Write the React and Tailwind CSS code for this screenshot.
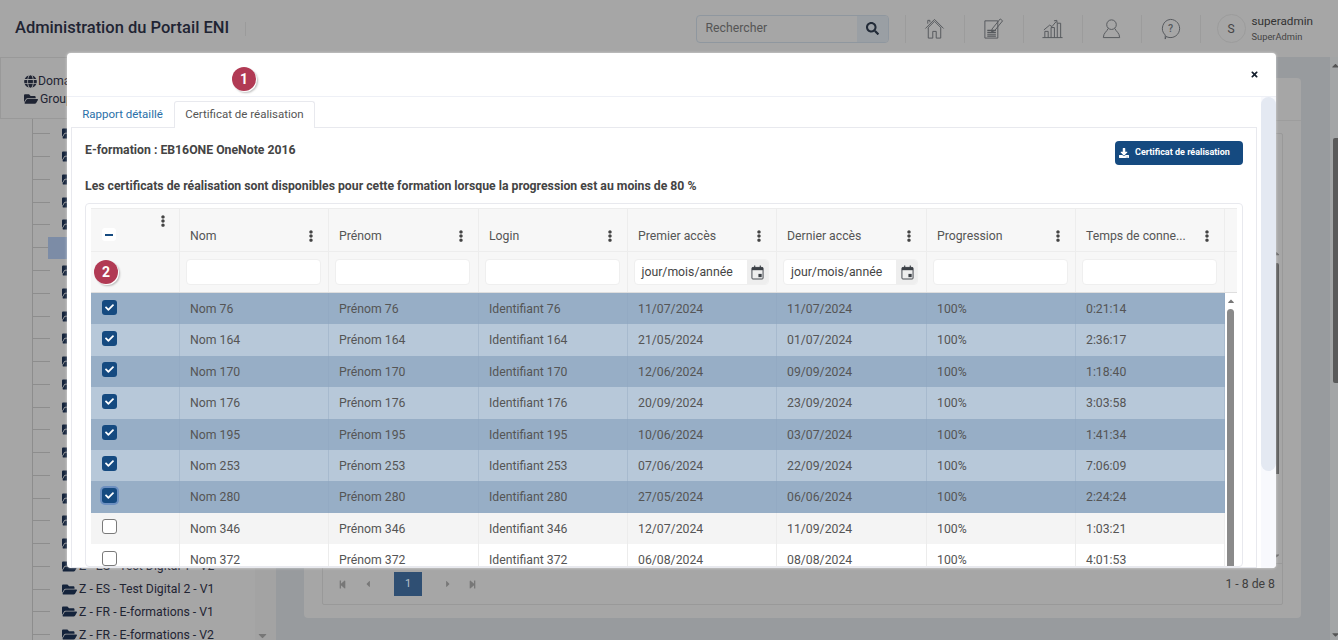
import React from "react";
import { FaGlobe, FaFolderOpen, FaSearch, FaDownload, FaEllipsisV, FaCheck, FaTimes, FaStepBackward, FaStepForward, FaCaretLeft, FaCaretRight, FaCaretDown, FaCaretUp } from "react-icons/fa";

const rows = [
  ["76", "11/07/2024", "11/07/2024", "0:21:14", 2],
  ["164", "21/05/2024", "01/07/2024", "2:36:17", 1],
  ["170", "12/06/2024", "09/09/2024", "1:18:40", 2],
  ["176", "20/09/2024", "23/09/2024", "3:03:58", 1],
  ["195", "10/06/2024", "03/07/2024", "1:41:34", 2],
  ["253", "07/06/2024", "22/09/2024", "7:06:09", 1],
  ["280", "27/05/2024", "06/06/2024", "2:24:24", 3],
  ["346", "12/07/2024", "11/09/2024", "1:03:21", 0],
  ["372", "06/08/2024", "08/08/2024", "4:01:53", 4],
];
const cols = [
  ["Nom", "w-[149px]"], ["Prénom", "w-[150px]"], ["Login", "w-[149px]"], ["Premier accès", "w-[149px]"],
  ["Dernier accès", "w-[150px]"], ["Progression", "w-[149px]"], ["Temps de conne...", "w-[149px]"],
];
const tree = ["", "", "", "", "", "", "", "", "", "", "", "", "", "", "", "", "", "", "Z - ES - Test Digital 1 - V1", "Z - ES - Test Digital 1 - V2", "Z - ES - Test Digital 2 - V1", "Z - FR - E-formations - V1", "Z - FR - E-formations - V2"];

const navIcons = [
  <><path d="M2.5 12 12 2.5 21.5 12M5 11.5l7-7 7 7" /><path d="M5 7V3.5h2.2v2" /><path d="M5.5 11.5V22h4.7v-7h3.6v7h4.7V11.5" /></>,
  <><path d="M3 4h13.5v18H3z" /><path d="M5.5 14h9M5.5 16h9M5.5 18h9M5.5 20h9" strokeWidth="1.3" /><path d="M10.5 12.5 19 2l2.5 2-8.5 10.5-3 1z" /></>,
  <><path d="M1.5 21.5h21M4 21.5V15h3.5v6.5M10.5 21.5V11H14v10.5M17 21.5V6.5h3.5v15" /><path d="M3 13.5 9 8.5l2.5 1.5L16 4.5M13.5 4l3-.5.3 3" /></>,
  <><circle cx="12" cy="8" r="5" /><path d="M8.5 12C7.5 15 3.5 16.500 3.500 21.500h17C20.500 16.500 16.500 15 15.500 12" /></>,
  <><path d="M12 2.500a9.500 9.500 0 1 1-4.600 17.800L6.500 23v-4.200A9.500 9.500 0 0 1 12 2.500z" /><text x="12" y="16" textAnchor="middle" fontSize="11" fontWeight="500" stroke="none" fill="#55585c">?</text></>,
];

function Nav({ d }) {
  return <svg viewBox="0 0 24 24" className="w-[23px] h-[23px]" fill="none" stroke="#55585c" strokeWidth="1">{d}</svg>;
}

function CalIcon() {
  return (
    <svg viewBox="0 0 14 16" className="w-[13px] h-[15px]" fill="none">
      <rect x="1" y="2.500" width="12" height="12.500" rx="1" stroke="#3a3f45" strokeWidth="1" />
      <rect x="1" y="2.500" width="12" height="3" fill="#3a3f45" />
      <path d="M4 0.500v2.500M10 0.500v2.500" stroke="#3a3f45" strokeWidth="1.2" />
      <rect x="8" y="9.500" width="3.500" height="3.500" fill="#3a3f45" />
    </svg>
  );
}

function Badge({ n, className }) {
  return <div className={"absolute w-[24px] h-[24px] rounded-full bg-[#b13a54] text-white text-[14px] font-bold flex items-center justify-center shadow-[1px_1px_0_#fff,2px_2px_2px_rgba(0,0,0,0.25)] " + className}>{n}</div>;
}

function Check({ state }) {
  if (state === 0 || state === 4) return <div className="w-[15px] h-[15px] rounded-[3px] bg-white border border-[#7a7a7a]" />;
  return (
    <div className={"w-[15px] h-[15px] rounded-[3px] bg-[#154a80] flex items-center justify-center " + (state === 3 ? "shadow-[0_0_0_2px_rgba(90,130,190,0.7)]" : "")}>
      <FaCheck className="text-white text-[9px]" />
    </div>
  );
}

function Row({ r }) {
  const [id, a, b, t, s] = r;
  const bg = s === 1 ? "bg-[#b7c8d9]" : s === 2 || s === 3 ? "bg-[#97aec6]" : s === 0 ? "bg-[#f4f4f4]" : "bg-white";
  const line = s === 0 || s === 4 ? "border-[#ececec]" : "border-[#8ea5bf]/40";
  const vals = [`Nom ${id}`, `Prénom ${id}`, `Identifiant ${id}`, a, b, "100%", t];
  return (
    <div className={"flex h-[31.4px] shrink-0 text-[12.25px] text-[#555] " + bg}>
      <div className={"w-[89px] pl-[10.500px] pt-[6.5px] border-r " + line}><Check state={s} /></div>
      {vals.map((v, i) => (
        <div key={i} className={"flex items-center pl-[10px] pt-px border-r " + line + " " + cols[i][1]}>{v}</div>
      ))}
    </div>
  );
}

export default function App() {
  return (
    <div className="relative w-[1338px] h-[640px] overflow-hidden bg-[#989b9e] font-['Roboto',sans-serif]">
      {/* header */}
      <header className="h-[57px] bg-[#a6a6a6] flex items-center pl-[15px] pr-[25px]">
        <div className="text-[16.5px] font-medium text-[#1f2433] leading-[28px] -mt-[1px]">Administration du Portail ENI</div>
        <span className="ml-[16px] w-px h-[14px] bg-[#9b9b9b]" />
        <div className="ml-auto flex items-center h-[28px] w-[193px] rounded-[4px] border border-[#8f979f] overflow-hidden">
          <span className="flex-1 pl-[9px] text-[12.25px] text-[#555]">Rechercher</span>
          <span className="w-[31px] h-full bg-[#9a9fa4] flex items-center justify-center text-[#222b38] text-[13px]"><FaSearch /></span>
        </div>
        <div className="flex items-center ml-[16px]">
          {navIcons.map((d, i) => (
            <div key={i} className="w-[59px] h-[28px] flex items-center justify-center border-l border-[#9c9c9c]"><Nav d={d} /></div>
          ))}
        </div>
        <div className="flex items-center border-l border-[#9c9c9c] pl-[16px] h-[28px]">
          <div className="w-[29px] h-[29px] rounded-full border border-[#9c9c9c] flex items-center justify-center text-[12px] text-[#444]">S</div>
          <div className="ml-[6px] flex flex-col leading-none">
            <span className="text-[11.700px] text-[#333]">superadmin</span>
            <span className="text-[9.300px] text-[#444] mt-[5px]">SuperAdmin</span>
          </div>
        </div>
      </header>

      <div className="flex h-[583px]">
        {/* sidebar */}
        <aside className="w-[276px] shrink-0 bg-[#a6a6a6] relative">
          <div className="h-[62px] border border-[#999] pl-[23px] pt-[14px] text-[12.25px] text-[#1f2433] leading-[18px]">
            <div className="flex items-center gap-[1px]"><FaGlobe className="text-[13px]" />Domaines</div>
            <div className="flex items-center gap-[2px]"><FaFolderOpen className="text-[14px]" />Groupes</div>
          </div>
          <div className="ml-[32px] border-l border-[#8d8d8d] pt-[3.5px] flex flex-col">
            {tree.map((t, i) => (
              <div key={i} className="relative flex items-center h-[22.77px] shrink-0 text-[12.25px] text-[#1f2433] whitespace-nowrap">
                <span className="w-[17px] h-px bg-[#8d8d8d] mr-[12px]" />
                <FaFolderOpen className="text-[#14233b] text-[15px] mr-[2px] shrink-0" />
                <span>{t}</span>
              </div>
            ))}
          </div>
          <div className="absolute left-[48px] top-[180px] w-[30px] h-[22px] bg-[#7c8ca6]" />
          <div className="absolute right-0 top-0 bottom-0 w-[21px] bg-[#a3a3a3]" />
          <FaCaretDown className="absolute left-[256px] top-[572px] text-[#777] text-[13px]" />
        </aside>

        {/* main */}
        <main className="flex-1 pt-[21px] pl-[28px] pr-[37px]">
          <div className="bg-[#a6a6a6] rounded-[4px] h-[540px] pb-[13px] flex flex-col">
            <div className="h-[43px] shrink-0 border-b border-[#9d9d9d]" />
            <div className="flex-1 min-h-0 mt-[12px] mx-[18px] border border-[#999] rounded-[2px] flex flex-col">
              <div className="flex-1 relative border-b border-[#999]">
                <div className="absolute right-[3px] top-[129px] w-[4px] bg-[#5b5b5b] rounded-t-[2px]" style={{ bottom: "89px" }} />
                <FaCaretUp className="absolute right-[1px] top-[115px] text-[#666] text-[9px]" />
                <FaCaretDown className="absolute right-[1px] bottom-[3px] text-[#666] text-[9px]" />
              </div>
              <div className="flex items-center h-[40px] shrink-0 pl-[15px] pr-[7px] text-[#777] text-[9px]">
                <FaStepBackward className="mr-[16px]" />
                <FaCaretLeft className="mr-[21px] text-[10px]" />
                <div className="w-[28px] h-[24px] bg-[#2f4f73] text-[#b9c2cc] text-[11px] flex items-center justify-center mr-[21px]">1</div>
                <FaCaretRight className="mr-[15px] text-[10px]" />
                <FaStepForward />
                <span className="ml-auto text-[12.25px] text-[#3f3f3f]">1 - 8 de 8</span>
              </div>
            </div>
          </div>
        </main>
      </div>

      {/* page scrollbar */}
      <div className="absolute right-0 top-[57px] bottom-0 w-[8px] bg-[#a3a5a6]">
        <FaCaretUp className="absolute left-0 top-[3px] text-[#555] text-[11px]" />
        <div className="absolute left-[3px] top-[81px] h-[245px] w-[5px] bg-[#5a5a5a] rounded-l-[2px]" />
        <FaCaretDown className="absolute left-0 bottom-0 text-[#555] text-[11px]" />
      </div>

      {/* modal */}
      <div className="absolute left-[67px] top-[53px] w-[1209px] h-[515px] bg-white rounded-[4px] overflow-hidden flex flex-col shadow-[0_0_3px_rgba(255,255,255,0.6)]">
        <div className="relative h-[44px] shrink-0 border-b border-[#eef0f6]">
          <Badge n="1" className="left-[165px] top-[14px]" />
          <FaTimes className="absolute right-[17px] top-[17px] text-[#15202e] text-[9px]" />
        </div>
        <div className="flex flex-1 min-h-0">
          <div className="flex-1 min-w-0 pt-[4px] pl-[4px] pr-[4px] flex flex-col">
            <div className="flex h-[26px] shrink-0 text-[11.5px]">
              <div className="w-[103px] flex items-center justify-center pt-px text-[#2a6fa8]">Rapport détaillé</div>
              <div className="w-[141px] flex items-center justify-center text-[#555] border border-b-0 border-[#e8e9ee] rounded-t-[3px] bg-white relative z-10 -mb-px">Certificat de réalisation</div>
            </div>
            <div className="flex-1 border border-[#e8e9ee] pl-[13px] pr-[13px] min-h-0 flex flex-col">
              <div className="flex items-start justify-between h-[50px] shrink-0 pt-[13px]">
                <span className="text-[12.25px] font-bold text-[#444] leading-[18px]">E-formation : EB16ONE OneNote 2016</span>
                <button className="w-[128px] h-[24px] rounded-[4px] bg-[#154a80] text-white text-[9px] font-bold flex items-center justify-start pl-[4px] gap-[6px]"><FaDownload className="text-[10px]" />Certificat de réalisation</button>
              </div>
              <div className="h-[25px] shrink-0 text-[12.25px] font-bold text-[#444] leading-[16px]">Les certificats de réalisation sont disponibles pour cette formation lorsque la progression est au moins de 80 %</div>
              <div className="border border-[#e8e9ee] rounded-[4px] px-[5px] pt-[4px] relative flex flex-col flex-1 min-h-0 overflow-hidden">
                <div className="flex h-[44px] shrink-0 bg-[#f7f7f7] border-b border-t border-[#ededed] text-[12.25px] text-[#555]">
                  <div className="relative w-[89px] border-r border-[#ededed] pl-[11px] pt-[19px]">
                    <div className="w-[14px] h-[13px] rounded-[3px] bg-white flex items-center justify-center"><span className="w-[8px] h-[2px] bg-[#154a80]" /></div>
                    <FaEllipsisV className="absolute right-[10px] top-[6px] text-[#444] text-[12px]" />
                  </div>
                  {cols.map(([c, w]) => (
                    <div key={c} className={"relative flex items-center pl-[10px] pt-[13px] border-r border-[#ededed] " + w}>
                      {c}
                      <FaEllipsisV className="absolute right-[11px] top-[21px] text-[#444] text-[12px]" />
                    </div>
                  ))}
                  <div className="flex-1" />
                </div>
                <div className="flex h-[41px] shrink-0 bg-[#f7f7f7] border-b border-[#dedede] text-[12.25px] text-[#555]">
                  <div className="w-[89px] border-r border-[#ededed]" />
                  {cols.map(([c, w], i) => (
                    <div key={c} className={"flex items-center justify-center pr-[2px] border-r border-[#ededed] " + w}>
                      {i === 3 || i === 4 ? (
                        <div className="w-[135px] h-[26px] rounded-[4px] bg-white border border-[#efefef] flex overflow-hidden">
                          <span className="flex-1 flex items-center pl-[7px] pt-px text-[#444]">jour/mois/année</span>
                          <span className="w-[21px] bg-[#eeeeee] flex items-center justify-center pl-px"><CalIcon /></span>
                        </div>
                      ) : (
                        <div className="w-[135px] h-[26px] rounded-[4px] bg-white border border-[#efefef]" />
                      )}
                    </div>
                  ))}
                  <div className="flex-1" />
                </div>
                <div className="flex flex-1 min-h-0">
                  <div className="w-[1134px] flex flex-col shrink-0">
                    {rows.map((r) => <Row key={r[0]} r={r} />)}
                  </div>
                  <div className="w-[13px] -ml-px relative flex flex-col items-center">
                    <FaCaretUp className="text-[#777] text-[10px] mt-[3px]" />
                    <div className="w-[7px] flex-1 mt-[3px] rounded-t-[4px] bg-[#8a8a8a]" />
                  </div>
                </div>
                <Badge n="2" className="left-[8px] top-[56px]" />
              </div>
            </div>
          </div>
          <div className="w-[15px] shrink-0 relative bg-[#f8f9fd]">
            <div className="absolute top-0 left-0 right-0 h-[374px] bg-[#e4e9f2] rounded-full" />
          </div>
        </div>
      </div>
    </div>
  );
}
